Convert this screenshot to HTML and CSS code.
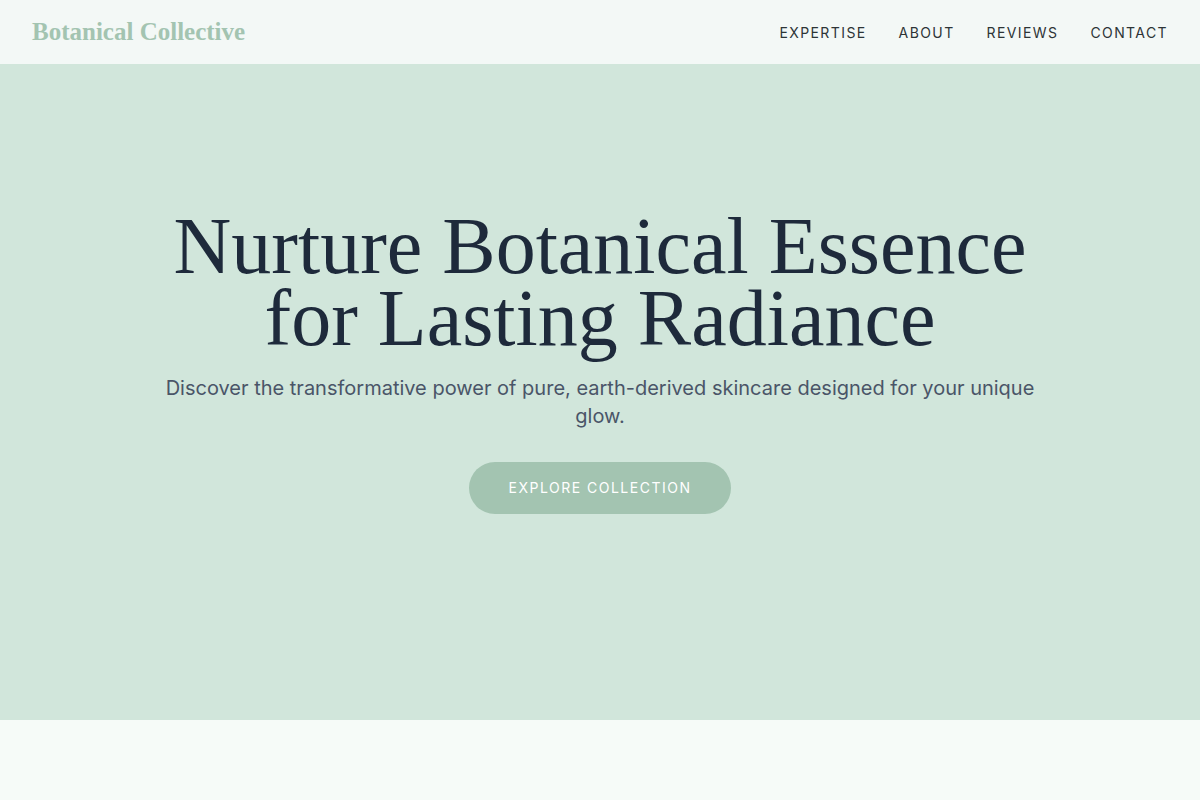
FILE: index.html
```html
<!DOCTYPE html>
<html lang="en">
<head>
    <meta charset="UTF-8">
    <meta name="viewport" content="width=device-width, initial-scale=1.0">
    <title>Botanical Collective</title>
    <link rel="stylesheet" href="styles.css">
</head>
<body>
    <header>
        <div class="logo">Botanical Collective</div>
        <nav>
            <a href="#expertise">Expertise</a>
            <a href="#about">About</a>
            <a href="#reviews">Reviews</a>
            <a href="#contact">Contact</a>
        </nav>
    </header>
    <section class="hero">
        <h1>Nurture Botanical Essence<br>for Lasting Radiance</h1>
        <p>Discover the transformative power of pure, earth-derived skincare designed for your unique glow.</p>
        <a class="btn" href="#collection">Explore Collection</a>
    </section>
    <section class="next" id="expertise"></section>
</body>
</html>
```

FILE: styles.css
```css
body {
    font-family: Inter, "Liberation Sans", sans-serif;
    margin: 0;
    padding: 0;
    background-color: #f6fbf8;
    color: #1e2a3b;
}
header {
    height: 64px;
    display: flex;
    align-items: center;
    justify-content: space-between;
    padding: 0 32px;
    background-color: #f3f8f6;
}
.logo {
    font-family: "Liberation Serif", serif;
    font-weight: bold;
    font-size: 25px;
    color: #a3c4b1;
}
nav {
    display: flex;
    gap: 32px;
}
nav a {
    color: #2d3436;
    text-decoration: none;
    text-transform: uppercase;
    font-size: 14px;
    letter-spacing: 1.4px;
}
.hero {
    height: 656px;
    box-sizing: border-box;
    padding-bottom: 60px;
    background-color: #d1e6db;
    display: flex;
    flex-direction: column;
    align-items: center;
    justify-content: center;
    text-align: center;
}
.hero h1 {
    font-family: "Liberation Serif", serif;
    font-weight: normal;
    font-size: 80px;
    line-height: 72px;
    margin: 0 0 20px;
    color: #1e2a3b;
}
.hero p {
    max-width: 880px;
    font-size: 20px;
    line-height: 28px;
    color: #4a5568;
    margin: 0 0 32px;
}
.btn {
    display: inline-block;
    padding: 16px 40px;
    border-radius: 50px;
    background-color: #a3c4b1;
    color: #fff;
    text-decoration: none;
    text-transform: uppercase;
    font-size: 14px;
    line-height: 20px;
    letter-spacing: 1.5px;
}
.next {
    height: 80px;
}
```
